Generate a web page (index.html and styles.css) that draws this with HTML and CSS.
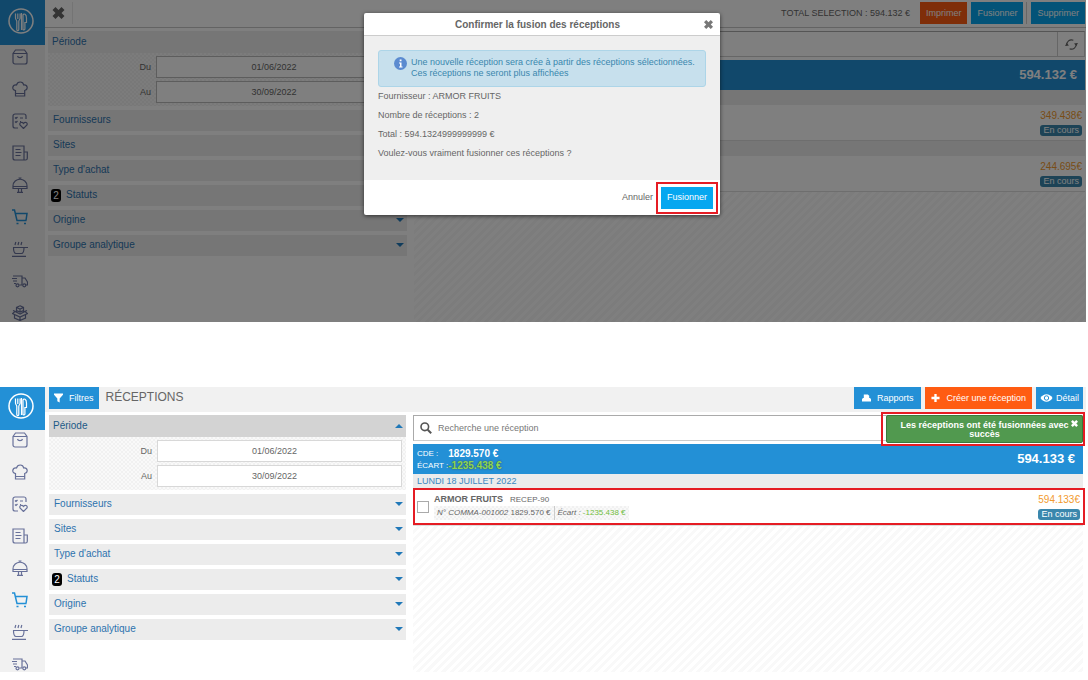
FILE: index.html
```html
<!DOCTYPE html>
<html lang="fr">
<head>
<meta charset="utf-8">
<title>Réceptions</title>
<link rel="stylesheet" href="styles.css">
</head>
<body>
<svg class="sprite" aria-hidden="true">
  <symbol id="i-logo" viewBox="0 0 26 26"><circle cx="13" cy="13" r="12" fill="none" stroke="currentColor" stroke-width="1.500"/><path d="M7.500 5.500v4.500c0 1.700 1.300 1.800 1.300 3.500v8c0 1.400 2 1.400 2 0v-8c0-1.700 1.300-1.800 1.300-3.500V5.500M9.800 5.500v5.500M15 22V7c.8-2 3.500-1 3.500 3v4.500h-1.600V21c0 1-1.900 1.500-1.900 0M13.500 5v17" fill="none" stroke="currentColor" stroke-width="1.200"/></symbol>
  <symbol id="i-bag" viewBox="0 0 16 16"><path d="M1 4.500 3.500 1h9L15 4.500V13a2 2 0 0 1-2 2H3a2 2 0 0 1-2-2zM1 4.500h14M5.500 7c.5 2.200 4.500 2.200 5 0"/></symbol>
  <symbol id="i-chef" viewBox="0 0 16 16"><path d="M3.500 9.500C-.5 9 0 3.500 4.500 4c1-4 6.500-4 7.200 0 4-.5 4.800 4.500 1 5.500V15h-9.200zM3.500 12.500h9.200"/></symbol>
  <symbol id="i-list" viewBox="0 0 16 16"><path d="M14 6V3a2 2 0 0 0-2-2H3a2 2 0 0 0-2 2v10a2 2 0 0 0 2 2h3M3 4.500l1 1L5.500 4M8 5h3M3 8.500l1 1L5.500 8M8 8.500h1M11.500 15.500 8 12c-1-2.500 2-3.500 3.500-1.500 1.500-2 4.500-1 3.500 1.500z"/></symbol>
  <symbol id="i-news" viewBox="0 0 16 16"><path d="M12 15V1H1v12a2 2 0 0 0 2 2h10.500c1 0 1.800-.8 1.800-1.800V7H12M3.500 4.500h5M3.500 7.500h6M3.500 10.500h5"/></symbol>
  <symbol id="i-bell" viewBox="0 0 16 16"><path d="M1 11.500V9c0-9 14-9 14 0v2.500zM1 9.500h14M8 2V.5M6.500 1h3M6.500 12v3M9.500 12v3M5 15.300h6"/></symbol>
  <symbol id="i-cart" viewBox="0 0 16 16"><path d="M0 1h2.500L5 11.500h9.500M3.300 4.500H15L14 11.500M4.500 14.500h2M12 14.500h2" stroke-width="1.500"/></symbol>
  <symbol id="i-cup" viewBox="0 0 16 16"><path d="M1 6.500h15M1.500 6.500c0 4 1.200 6 2.500 6h5.500c1.500 0 2.500-2 2.500-6M0 15.300h14M3 4l.8-3M6 4l.8-3M9 4l.8-3"/></symbol>
  <symbol id="i-truck" viewBox="0 0 16 16"><path d="M1 3h9v9H7.500M10 5h3l2.500 4v3H14M0 5.500h5M1 8h4M2 10.500h2"/><circle cx="5.500" cy="12.300" r="1.500"/><circle cx="12.300" cy="12.300" r="1.500"/></symbol>
  <symbol id="i-box" viewBox="0 0 16 16"><path d="M8 .8 11.500 2.500v3L8 7 4.500 5.500v-3zM4.500 2.500 8 4l3.500-1.500M8 4v3M8 9 3 6.500.5 8.500 8 12l7.500-3.500L13 6.500zM2.500 10v3L8 15.500l5.500-2.500v-3M8 12v3.500M1 5.500 5 7M15 5.500 11 7"/></symbol>
  <symbol id="i-close" viewBox="0 0 12 12"><path d="M3 0 6 3 9 0l3 3-3 3 3 3-3 3-3-3-3 3-3-3 3-3-3-3z" fill="currentColor"/></symbol>
</svg>

<section class="screen screen-top">
  <nav class="rail" aria-label="Modules">
    <a class="logo" href="#"><svg><use href="#i-logo"/></svg></a>
    <div class="rail-items">
      <a href="#"><svg><use href="#i-bag"/></svg></a>
      <a href="#"><svg><use href="#i-chef"/></svg></a>
      <a href="#"><svg><use href="#i-list"/></svg></a>
      <a href="#"><svg><use href="#i-news"/></svg></a>
      <a href="#"><svg><use href="#i-bell"/></svg></a>
      <a href="#" class="current"><svg><use href="#i-cart"/></svg></a>
      <a href="#"><svg><use href="#i-cup"/></svg></a>
      <a href="#"><svg><use href="#i-truck"/></svg></a>
      <a href="#"><svg><use href="#i-box"/></svg></a>
    </div>
  </nav>
  <div class="page">
    <header class="bar">
      <button class="clear" aria-label="Annuler la sélection"><svg><use href="#i-close"/></svg></button>
      <p class="total">TOTAL SELECTION : 594.132 €</p>
      <button class="btn orange">Imprimer</button>
      <button class="btn sky">Fusionner</button>
      <span class="rule"></span>
      <button class="btn sky">Supprimer</button>
    </header>
    <div class="columns">
      <aside class="filters">
        <button class="fold open">Période<i></i></button>
        <div class="dates">
          <label for="du1">Du</label><input id="du1" value="01/06/2022">
          <label for="au1">Au</label><input id="au1" value="30/09/2022">
        </div>
        <button class="fold">Fournisseurs<i></i></button>
        <button class="fold">Sites<i></i></button>
        <button class="fold">Type d'achat<i></i></button>
        <button class="fold"><b>2</b>Statuts<i></i></button>
        <button class="fold">Origine<i></i></button>
        <button class="fold">Groupe analytique<i></i></button>
      </aside>
      <main class="results">
        <div class="search">
          <input aria-label="Recherche">
          <button class="refresh" aria-label="Actualiser"><svg viewBox="0 0 14 14"><path d="M2 8a5 5 0 0 1 7-5.500M12 6a5 5 0 0 1-7 5.500" fill="none" stroke="currentColor" stroke-width="1.300"/><path d="M0 8.500 1.800 5.500 4.300 8zM14 5.500 12.200 8.500 9.700 6z" fill="currentColor"/></svg></button>
        </div>
        <div class="summary"><strong>594.132 €</strong></div>
        <div class="day"></div>
        <article class="entry"><div class="amount"><span>349.438€</span><em>En cours</em></div></article>
        <div class="day"></div>
        <article class="entry"><div class="amount"><span>244.695€</span><em>En cours</em></div></article>
        <div class="hatch"></div>
      </main>
    </div>
  </div>
  <div class="shade">
    <div class="modal" role="dialog" aria-labelledby="dlg">
      <header><h2 id="dlg">Confirmer la fusion des réceptions</h2><button aria-label="Fermer"><svg><use href="#i-close"/></svg></button></header>
      <div class="modal-body">
        <div class="info">
          <svg viewBox="0 0 13 13"><circle cx="6.500" cy="6.500" r="6.500" fill="#5b8bd0"/><path d="M5 5.500h2.500v4h1v1H5v-1h1v-3H5zM5.700 2.500h1.800v1.800H5.700z" fill="#fff"/></svg>
          <p>Une nouvelle réception sera crée à partir des réceptions sélectionnées.<br>Ces réceptions ne seront plus affichées</p>
        </div>
        <p>Fournisseur : ARMOR FRUITS</p>
        <p>Nombre de réceptions : 2</p>
        <p>Total : 594.1324999999999 €</p>
        <p>Voulez-vous vraiment fusionner ces réceptions ?</p>
      </div>
      <footer><button class="cancel">Annuler</button><span class="mark mark-button"><button class="btn bright">Fusionner</button></span></footer>
    </div>
  </div>
</section>

<section class="screen screen-bottom">
  <nav class="rail" aria-label="Modules">
    <a class="logo" href="#"><svg><use href="#i-logo"/></svg></a>
    <div class="rail-items">
      <a href="#"><svg><use href="#i-bag"/></svg></a>
      <a href="#"><svg><use href="#i-chef"/></svg></a>
      <a href="#"><svg><use href="#i-list"/></svg></a>
      <a href="#"><svg><use href="#i-news"/></svg></a>
      <a href="#"><svg><use href="#i-bell"/></svg></a>
      <a href="#" class="current"><svg><use href="#i-cart"/></svg></a>
      <a href="#"><svg><use href="#i-cup"/></svg></a>
      <a href="#"><svg><use href="#i-truck"/></svg></a>
    </div>
  </nav>
  <div class="page">
    <header class="bar">
      <button class="btn blue"><svg viewBox="0 0 10 10"><path d="M0 0h10v1.500L6.300 5.500V10L3.700 8.500v-3L0 1.500z" fill="currentColor"/></svg>Filtres</button>
      <h1>RÉCEPTIONS</h1>
      <button class="btn blue wide"><svg viewBox="0 0 10 10"><path d="M2 1h4.500L8 2.500V5h1l1 1.500V9H0V6.500L1 5h1z" fill="currentColor"/></svg>Rapports</button>
      <button class="btn orange wide"><svg viewBox="0 0 10 10"><path d="M3.700.5h2.600v3.200h3.200v2.600H6.300v3.200H3.700V6.300H.5V3.700h3.200z" fill="currentColor"/></svg>Créer une réception</button>
      <button class="btn blue eye"><svg viewBox="0 0 12 10"><path d="M0 5c3-5 9-5 12 0-3 5-9 5-12 0z" fill="currentColor"/><circle cx="6" cy="5" r="2.200" fill="none" stroke="#2390d6"/></svg>Détail</button>
    </header>
    <div class="columns">
      <aside class="filters">
        <button class="fold open">Période<i></i></button>
        <div class="dates">
          <label for="du2">Du</label><input id="du2" value="01/06/2022">
          <label for="au2">Au</label><input id="au2" value="30/09/2022">
        </div>
        <button class="fold">Fournisseurs<i></i></button>
        <button class="fold">Sites<i></i></button>
        <button class="fold">Type d'achat<i></i></button>
        <button class="fold"><b>2</b>Statuts<i></i></button>
        <button class="fold">Origine<i></i></button>
        <button class="fold">Groupe analytique<i></i></button>
      </aside>
      <main class="results">
        <div class="search">
          <svg viewBox="0 0 12 12"><circle cx="4.800" cy="4.800" r="3.800" fill="none" stroke="currentColor" stroke-width="1.600"/><path d="m7.700 7.700 3.500 3.500" stroke="currentColor" stroke-width="2"/></svg>
          <input aria-label="Recherche" placeholder="Recherche une réception">
        </div>
        <div class="summary">
          <dl><dt>CDE :</dt><dd>1829.570 €</dd><dt>ÉCART :</dt><dd class="gap">-1235.438 €</dd></dl>
          <strong>594.133 €</strong>
        </div>
        <div class="day">LUNDI 18 JUILLET 2022</div>
        <article class="entry mark mark-row">
          <input type="checkbox" aria-label="Sélectionner ARMOR FRUITS">
          <div class="details">
            <p class="supplier"><strong>ARMOR FRUITS</strong><span>RECEP-90</span></p>
            <p class="order"><span><em>N° COMMA-001002</em> 1829.570 €</span><span><em>Écart :</em> <ins>-1235.438 €</ins></span></p>
          </div>
          <div class="amount"><span>594.133€</span><em>En cours</em></div>
        </article>
        <div class="hatch"></div>
      </main>
    </div>
  </div>
  <div class="toast mark" role="status"><p>Les réceptions ont été fusionnées avec succès</p><button aria-label="Fermer"><svg><use href="#i-close"/></svg></button></div>
</section>
</body>
</html>
```
FILE: styles.css
```css
* { box-sizing: border-box; margin: 0; padding: 0; }
body {
  padding-right: 2px;
  background: #fff;
  color: #666;
  font: 9px/11px "Liberation Sans", Arial, sans-serif;
}
button, input { font: inherit; color: inherit; border: 0; background: none; border-radius: 0; }
svg { display: block; flex: none; }
em, ins { font-style: normal; text-decoration: none; }
.sprite { display: none; }

.screen { position: relative; display: grid; grid-template-columns: 45px 1fr; overflow: hidden; }
.screen-top { height: 322px; }
.screen-bottom { height: 285px; margin-top: 65px; }

.rail { background: #f1f1f1; color: #68719a; }
.rail svg { width: 16px; height: 16px; fill: none; stroke: currentColor; stroke-width: 1.200; }
.logo { display: grid; place-items: center; height: 45px; padding-right: 4px; padding-bottom: 3px; background: #2390d6; color: #fff; }
.rail .logo svg { width: 26px; height: 26px; stroke: none; }
.rail-items { display: flex; flex-direction: column; gap: 16px; padding: 4px 12px 0; }
.rail-items a { color: inherit; }
.rail-items .current { color: #2390d6; }
.screen-bottom .logo { height: 43px; padding-bottom: 6px; }
.screen-bottom .rail-items { padding-top: 2px; }

.page { display: flex; flex-direction: column; min-width: 0; }
.bar { display: flex; align-items: flex-start; gap: 4px; background: #f1f1f1; }
.screen-top .bar { height: 28px; padding: 2px 1px 0 0; background: #fff; border-bottom: 1px solid #c6c6c6; }
.screen-bottom .bar { height: 25px; padding: 0 3px 0 4px; }
.clear { height: 22px; padding: 0 7px; color: #666; border-right: 1px solid #e8e8e8; }
.clear svg { width: 13px; height: 12px; }
.total { flex: 1; padding-right: 6px; text-align: right; line-height: 22px; }
.rule { width: 1px; height: 22px; margin: 0 0 0 -1px; background: #ccc; }
.btn { display: flex; align-items: center; justify-content: center; gap: 6px; height: 22px; padding: 0 6px; color: #fff; white-space: nowrap; }
.btn svg { width: 9px; height: 10px; }
.blue { background: #2390d6; }
.sky, .bright { background: #06a7f0; }
.orange { background: #ff5c12; }
.screen-bottom .btn { padding: 0 5px; }
.screen-bottom .wide { gap: 6px; padding: 0 8px; }
.screen-bottom .orange { padding: 0 6px; }
.screen-bottom .eye { gap: 3px; padding: 0 4px; }
.eye svg { width: 13px; }
h1 { flex: 1; padding-left: 3px; font-size: 12px; font-weight: normal; line-height: 21px; }

.columns { flex: 1; display: grid; grid-template-columns: 359px 1fr; gap: 7px; padding: 3px 1px 0 3px; }
.screen-bottom .columns { padding: 3px 3px 0 4px; grid-template-columns: 357px 1fr; }

.filters { display: flex; flex-direction: column; gap: 4px; }
.fold { display: flex; align-items: center; height: 21px; padding: 0 3px 2px 5px; background: #ececec; color: #2e73ae; font-size: 10px; text-align: left; }
.fold i { margin-left: auto; border: 4px solid transparent; border-top: 4px solid #2078b8; border-bottom: 0; }
.fold b { margin: 2px 5px 0 -2px; width: 10px; height: 13px; border-radius: 3px; background: #000; color: #fff; font-weight: normal; line-height: 13px; text-align: center; }
.fold.open { height: 22px; padding-left: 4px; }
.screen-bottom .open { background: #d3d3d3; color: #1c5a87; }
.fold.open i { margin-top: 2px; border-top: 0; border-bottom: 4px solid #2078b8; }
.dates {
  display: grid; grid-template-columns: 103px 1fr; gap: 3px 5px; align-items: center;
  margin-top: -4px; padding: 3px 4px 3px 0;
  background: repeating-conic-gradient(#f1f1f1 0 25%, #f9f9f9 0 50%) 0 0 / 4px 4px;
}
.dates label { text-align: right; }
.dates input { width: 100%; height: 22px; padding-right: 10px; background: #fff; border: 1px solid #d8d8d8; text-align: center; }
.screen-top .dates { padding-right: 5px; }
.screen-top .dates input { border-color: #bbb; }

.results { display: flex; flex-direction: column; min-width: 0; }
.search { display: flex; align-items: center; height: 26px; margin-bottom: 3px; background: #fff; border: 1px solid #ccc; border-top-color: #aaa; border-left-color: #aaa; }
.search > svg { width: 12px; height: 12px; margin: 0 6px; color: #555; }
.search input { flex: 1; min-width: 0; height: 24px; }
.search input::placeholder { color: #777; opacity: 1; }
.refresh { display: grid; place-items: center; width: 27px; height: 24px; border-left: 1px solid #ccc; }
.refresh svg { width: 13px; height: 13px; }
.summary { display: flex; align-items: center; height: 30px; padding: 0 8px 0 4px; background: #2390d6; color: #fff; }
.summary > strong { margin-left: auto; font-size: 13px; line-height: 16px; }
.summary dl { display: grid; grid-template-columns: auto auto; align-items: center; gap: 1px 0; font-size: 8px; }
.summary dd { font-size: 10px; font-weight: bold; }
.summary dd.gap { color: #8bd850; text-shadow: 0 0 2px #444; }
.day { height: 15px; padding-left: 4px; background: #ececec; color: #3a87c0; line-height: 15px; }
.screen-bottom .day { height: 14px; }
.entry { display: flex; align-items: center; gap: 5px; height: 36px; padding: 0 3px 0 4px; background: #fff; border-bottom: 1px solid #ddd; }
.amount { display: flex; flex-direction: column; align-items: flex-end; gap: 4px; margin-left: auto; color: #f29a2e; font-size: 10px; }
.amount em { padding: 0 3px; border-radius: 3px; background: #3a87ad; color: #fff; font-size: 9px; }
.entry input { appearance: none; width: 12px; height: 12px; border: 1px solid #aaa; background: #fff; }
.details { display: flex; flex-direction: column; gap: 1px; }
.supplier { display: flex; gap: 7px; font-size: 8px; }
.supplier strong { font-size: 9px; }
.order { display: flex; font-size: 8px; line-height: 14px; background: repeating-conic-gradient(#f1f1f1 0 25%, #f9f9f9 0 50%) 0 0 / 4px 4px; }
.order span { padding: 0 3px; }
.order span + span { border-left: 1px solid #ccc; }
.order em { font-style: italic; }
.order ins { color: #72bd3e; }
.hatch { flex: 1; background: repeating-linear-gradient(135deg, #fff 0 3px, #f9f9f9 3px 6px); }

.shade { position: absolute; inset: 0; background: rgba(0, 0, 0, .5); display: flex; justify-content: center; align-items: flex-start; padding: 13px 2px 0 0; }
.modal { width: 356px; background: #fff; border-radius: 2px; box-shadow: 0 1px 4px rgba(0, 0, 0, .6); }
.modal > header { display: grid; grid-template-columns: 1fr auto; align-items: center; height: 23px; padding: 0 7px 0 7px; border-bottom: 1px solid #ccc; }
.modal h2 { font-size: 10px; text-align: center; }
.modal header svg { width: 9px; height: 9px; color: #777; }
.modal-body { display: flex; flex-direction: column; gap: 8px; height: 144px; padding: 14px; background: #efefef; }
.info { display: flex; gap: 4px; height: 37px; margin-bottom: -4px; padding: 6px 0 0 15px; background: #c7e0ed; border: 1px solid #add5e8; border-radius: 3px; color: #3a87ad; white-space: nowrap; }
.info svg { width: 13px; height: 13px; }
.modal footer { display: flex; align-items: center; justify-content: flex-end; gap: 8px; height: 35px; padding-right: 7px; }

.mark { position: relative; }
.mark::after { content: ""; position: absolute; inset: -5px; border: 2px solid #e51c24; pointer-events: none; }
.mark-row { height: 38px; }
.mark-row::after { inset: 0 -2px 0 0; }
.mark-row.mark::after, .toast.mark::after { border-width: 2px; }
.mark-row { padding-left: 4px; }
.toast { position: absolute; top: 28px; right: 3px; width: 197px; height: 28px; padding: 5px 12px 0; background: #51994f; border: 1px solid #397a3b; border-radius: 2px; color: #fff; font-weight: bold; line-height: 9px; text-align: center; }
.toast.mark::after { inset: -4px -3px -4px -6px; }
.toast button { position: absolute; top: 4px; right: 4px; }
.toast svg { width: 7px; height: 7px; }
```
